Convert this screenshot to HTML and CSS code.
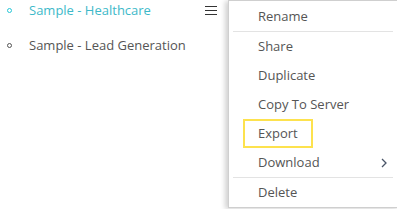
FILE: index.html
```html
<!DOCTYPE html>
<html>
<head>
<meta charset="utf-8">
<link rel="stylesheet" href="styles.css">
</head>
<body>
<div class="page">
  <ul class="list">
    <li class="item active">
      <span class="bullet"></span>
      <span class="label">Sample - Healthcare</span>
      <span class="burger"><i></i><i></i><i></i></span>
    </li>
    <li class="item">
      <span class="bullet"></span>
      <span class="label">Sample - Lead Generation</span>
    </li>
  </ul>
  <div class="menu">
    <div class="mi first">Rename</div>
    <div class="sep"></div>
    <div class="mi">Share</div>
    <div class="mi">Duplicate</div>
    <div class="mi">Copy To Server</div>
    <div class="mi"><span class="hl">Export</span></div>
    <div class="mi sub">Download
      <svg class="chev" width="6" height="10" viewBox="0 0 6 10"><path d="M1 1 L5 5 L1 9" fill="none" stroke="#4a5568" stroke-width="1.3"/></svg>
    </div>
    <div class="sep"></div>
    <div class="mi">Delete</div>
  </div>
</div>
</body>
</html>
```
FILE: styles.css
```css
html, body {
  margin: 0;
  padding: 0;
  background: #fff;
}
body {
  font-family: "Open Sans", "Liberation Sans", sans-serif;
  font-size: 13px;
  color: #555;
  width: 397px;
  height: 209px;
  overflow: hidden;
}
.page {
  position: relative;
  height: 209px;
}
.list {
  list-style: none;
  margin: 0;
  padding: 0;
  width: 217px;
}
.item {
  display: flex;
  align-items: center;
  height: 20px;
  line-height: 20px;
  padding-left: 7px;
  margin-bottom: 15px;
  color: #555;
}
.item.active {
  color: #3db9c9;
}
.bullet {
  width: 3px;
  height: 3px;
  border: 1.2px solid #555;
  border-radius: 50%;
  margin-right: 17px;
  flex: none;
}
.item.active .bullet {
  border-color: #27c6d6;
}
.burger {
  margin-left: auto;
  display: flex;
  flex-direction: column;
  gap: 3px;
  width: 12px;
}
.burger i {
  display: block;
  height: 1px;
  background: #333;
}
.menu {
  position: absolute;
  left: 228px;
  top: 0;
  width: 172px;
  height: 208px;
  box-sizing: border-box;
  background: #fff;
  border: 1px solid #cfcfcf;
  box-shadow: -3px 1px 5px rgba(0, 0, 0, 0.18);
}
.mi {
  height: 29px;
  line-height: 29px;
  padding-left: 29px;
  color: #555;
  position: relative;
}
.mi.first {
  height: 30px;
  line-height: 30px;
}
.sep {
  height: 1px;
  background: #e3e3e3;
  margin: 0 6px 0 4px;
}
.hl {
  display: inline-block;
  box-sizing: border-box;
  height: 29px;
  line-height: 25px;
  border: 2px solid #fde24e;
  padding: 0 13px;
  margin-left: -15px;
  vertical-align: top;
}
.chev {
  position: absolute;
  right: 12px;
  top: 10px;
}
```
